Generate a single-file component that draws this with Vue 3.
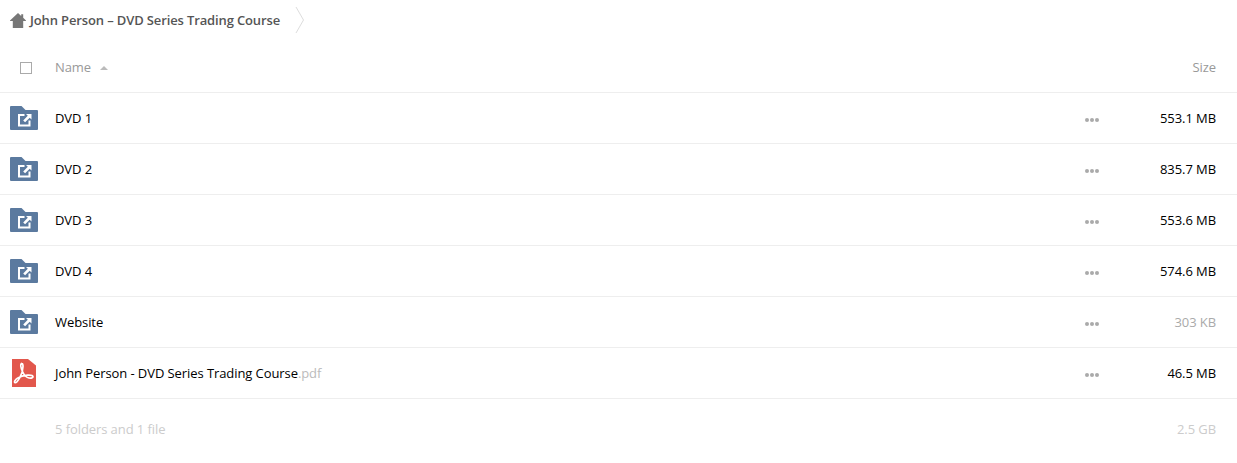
<template>
  <div class="files">
    <div class="crumbs">
      <svg class="home" width="16" height="15" viewBox="0 0 16 15">
        <path d="M8 0l3.200 2.900V1.200h2v3.500L16 7.400v.6h-2.800v7H2.800V8H0v-.6z" fill="#777"/>
      </svg>
      <span class="crumb-name">John Person – DVD Series Trading Course</span>
      <svg class="sep" width="10" height="28" viewBox="0 0 10 28">
        <path d="M1 1l7.500 13L1 27" fill="none" stroke="#ddd"/>
      </svg>
    </div>

    <div class="row head">
      <div class="check-cell"><span class="check"></span></div>
      <div class="name muted-head">Name <span class="sort"></span></div>
      <div class="size muted-head">Size</div>
    </div>

    <div v-for="item in items" :key="item.name" class="row item">
      <div class="icon-cell">
        <svg v-if="item.ext" class="pdf" width="24" height="28" viewBox="0 0 24 28">
          <path d="M0 0h16l8 6.500V28H0z" fill="#e2574c"/>
          <path d="M9.500 4.500c-1.200.8-.6 4.500 1.200 8.500 1.800 3.800 3.800 5.500 6.300 6 2.200.4 4.200-.2 4-1.300-.2-1.200-2.600-1.800-5.500-1.600-3.400.2-7.500 1.300-10 3-2.200 1.500-3.600 4-2.700 4.500 1 .5 3.200-1.800 5-5 1.800-3.200 3.200-7.500 3.200-11 0-2.200-.5-3.100-1-2.600z" fill="none" stroke="#fff" stroke-width="1.700"/>
        </svg>
        <svg v-else class="folder" width="28" height="24" viewBox="0 0 28 24">
          <path d="M0 1a1 1 0 0 1 1-1h10.500l4 4H27a1 1 0 0 1 1 1v18a1 1 0 0 1-1 1H1a1 1 0 0 1-1-1z" fill="#5b7a9f"/>
          <path d="M14.500 9H9v10.500h10.500v-5" fill="none" stroke="#fff" stroke-width="2"/>
          <path d="M16 8h5.500v5.500l-1.800-1.800-4.600 4.600-1.900-1.900 4.600-4.600z" fill="#fff"/>
        </svg>
      </div>
      <div class="name">{{ item.name }}<span v-if="item.ext" class="ext">{{ item.ext }}</span></div>
      <div class="more"><i></i><i></i><i></i></div>
      <div class="size" :class="{ small: item.dim }">{{ item.size }}</div>
    </div>

    <div class="row summary">
      <div class="name">5 folders and 1 file</div>
      <div class="size">2.5 GB</div>
    </div>
  </div>
</template>

<script setup>
const items = [
  { name: 'DVD 1', size: '553.1 MB' },
  { name: 'DVD 2', size: '835.7 MB' },
  { name: 'DVD 3', size: '553.6 MB' },
  { name: 'DVD 4', size: '574.6 MB' },
  { name: 'Website', size: '303 KB', dim: true },
  { name: 'John Person - DVD Series Trading Course', ext: '.pdf', size: '46.5 MB' }
]
</script>

<style>
html, body {
  background: #fff;
}
</style>

<style scoped>
.files {
  width: 1237px;
  font-family: "Open Sans", sans-serif;
  font-size: 13px;
  letter-spacing: -0.08px;
  color: #000;
}

.crumbs {
  display: flex;
  align-items: center;
  height: 44px;
  padding: 0 0 4px 10px;
  box-sizing: border-box;
}

.crumb-name {
  margin-left: 4px;
  font-weight: 600;
  letter-spacing: -0.13px;
  color: #555;
}

.sep {
  margin-left: 15px;
}

.row {
  display: flex;
  align-items: center;
  height: 50px;
  border-bottom: 1px solid #eee;
}

.row.head {
  height: 48px;
}

.row.head .muted-head {
  padding-bottom: 2px;
}

.check-cell {
  width: 55px;
  padding-left: 20px;
  box-sizing: border-box;
}

.check {
  display: block;
  width: 10px;
  height: 10px;
  border: 1px solid #aaa;
}

.muted-head {
  color: #999;
}

.sort {
  display: inline-block;
  margin-left: 6px;
  vertical-align: 2px;
  border-left: 4px solid transparent;
  border-right: 4px solid transparent;
  border-bottom: 4px solid #bbb;
}

.icon-cell {
  width: 55px;
  padding-left: 10px;
  box-sizing: border-box;
  display: flex;
}

.pdf {
  margin-left: 2px;
}

.name {
  flex: 1;
}

.ext {
  color: #bbb;
}

.more {
  display: flex;
  gap: 1px;
  width: 61px;
  padding-top: 3px;
}

.more i {
  width: 4px;
  height: 4px;
  border-radius: 50%;
  background: #aaa;
}

.size {
  width: 70px;
  margin-right: 21px;
  text-align: right;
}

.size.small {
  color: #aaa;
}

.size.muted-head {
  color: #999;
}

.row.summary {
  height: 60px;
  padding-left: 55px;
  border-bottom: none;
  color: #ccc;
}
</style>
